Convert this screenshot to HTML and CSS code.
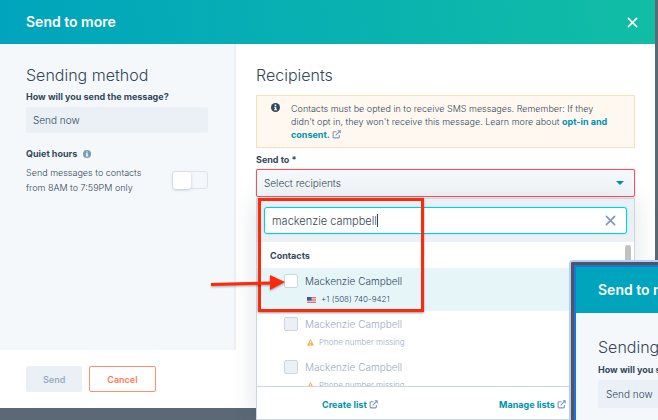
FILE: index.html
```html
<!DOCTYPE html>
<html lang="en">
<head>
<meta charset="utf-8">
<title>Send to more</title>
<link rel="stylesheet" href="styles.css">
</head>
<body>
<svg class="sprite" aria-hidden="true">
  <symbol id="external" viewBox="0 0 16 16"><path d="M8 3H3.5Q2 3 2 4.500V12.500Q2 14 3.500 14H11.500Q13 14 13 12.500V9M6.500 9.500L13.500 2.500" fill="none" stroke="currentColor" stroke-width="2"/><path d="M9.500 .5H15.500V6.500Z" fill="currentColor"/></symbol>
  <symbol id="info" viewBox="0 0 16 16"><circle cx="8" cy="8" r="8" fill="currentColor"/><path d="M6.600 2.800h2.800v2.400H6.600zM5.600 6.600h3.800v4.600h1.200v1.800H5.600v-1.800h1.200V8.400H5.600z" fill="#fff"/></symbol>
  <symbol id="close" viewBox="0 0 12 12"><path d="M1.500 1.500L10.500 10.500M10.500 1.500L1.500 10.500" fill="none" stroke="currentColor" stroke-width="1.700" stroke-linecap="round"/></symbol>
  <symbol id="warning" viewBox="0 0 12 12"><path d="M6 1L11 10.500H1Z" fill="#f5b652" stroke="#f5b652" stroke-width="1.500" stroke-linejoin="round"/><path d="M6 4v3.300M6 8.500v1.300" stroke="#fff" stroke-width="1.300"/></symbol>
  <symbol id="flag" viewBox="0 0 18 12"><path fill="#f4dfe3" d="M0 0h18v12H0z"/><path d="M0 1h18M0 4.300h18M0 7.600h18M0 11h18" stroke="#d9606f" stroke-width="1.700"/><path fill="#3c5a94" d="M0 0h9v7H0z"/></symbol>
</svg>

<main class="modal">
  <header class="modal-header">
    <h1>Send to more</h1>
    <button class="close" type="button" aria-label="Close"><svg><use href="#close"/></svg></button>
  </header>

  <div class="modal-body">
    <section class="method">
      <h2>Sending method</h2>
      <label class="label" for="when">How will you send the message?</label>
      <select class="when" id="when"><option>Send now</option></select>
      <label class="label quiet" for="quiet">Quiet hours <svg><use href="#info"/></svg></label>
      <div class="quiet-row">
        <p>Send messages to contacts from 8AM to 7:59PM only</p>
        <input class="toggle" id="quiet" type="checkbox">
      </div>
    </section>

    <section class="recipients">
      <h2>Recipients</h2>
      <div class="alert">
        <svg><use href="#info"/></svg>
        <p>Contacts must be opted in to receive SMS messages. Remember: If they didn't opt in, they won't receive this message. Learn more about <a href="#opt-in">opt-in and consent. <svg><use href="#external"/></svg></a></p>
      </div>
      <label class="label" for="send-to">Send to *</label>
      <div class="picker">
        <button class="picker-button" id="send-to" type="button">Select recipients <span class="caret"></span></button>
        <div class="menu">
          <div class="search">
            <input type="text" value="mackenzie campbell" aria-label="Search contacts">
            <span class="cursor"></span>
            <button class="clear" type="button" aria-label="Clear"><svg><use href="#close"/></svg></button>
          </div>
          <div class="list">
            <h3>Contacts</h3>
            <label class="contact active">
              <input type="checkbox">
              <span class="name">Mackenzie Campbell</span>
              <span class="detail"><svg class="flag"><use href="#flag"/></svg>+1 (508) 740-9421</span>
            </label>
            <label class="contact disabled">
              <input type="checkbox" disabled>
              <span class="name">Mackenzie Campbell</span>
              <span class="detail"><svg><use href="#warning"/></svg>Phone number missing</span>
            </label>
            <label class="contact disabled">
              <input type="checkbox" disabled>
              <span class="name">Mackenzie Campbell</span>
              <span class="detail"><svg><use href="#warning"/></svg>Phone number missing</span>
            </label>
            <span class="scrollbar"></span>
          </div>
          <div class="menu-footer">
            <a href="#create">Create list <svg><use href="#external"/></svg></a>
            <a href="#manage">Manage lists <svg><use href="#external"/></svg></a>
          </div>
          <div class="highlight"></div>
          <svg class="arrow" viewBox="0 0 76 20"><path d="M1 11.500L62 10" stroke="#fb2a0c" stroke-width="3"/><path d="M60 2L75 9L60 17Z" fill="#fb2a0c"/></svg>
        </div>
      </div>
    </section>
  </div>

  <footer class="modal-footer">
    <button class="send" type="button" disabled>Send</button>
    <button class="cancel" type="button">Cancel</button>
  </footer>
</main>

<aside class="inset">
  <header class="inset-header">Send to more</header>
  <div class="inset-body">
    <h2>Sending method</h2>
    <label class="label" for="inset-when">How will you send the message?</label>
    <select class="when" id="inset-when"><option>Send now</option></select>
  </div>
</aside>
</body>
</html>
```

FILE: styles.css
```css
* { box-sizing: border-box; }

body {
  margin: 0;
  min-height: 100vh;
  overflow: hidden;
  position: relative;
  background: #5b6876;
  color: #33475b;
  font: 300 9px/13px Inter, "Liberation Sans", sans-serif;
}

h1, h2, h3, p { margin: 0; }
button, input, select { font: inherit; color: inherit; margin: 0; }
svg { display: block; width: 9px; height: 9px; flex: none; }
.sprite { position: absolute; width: 0; height: 0; }
a { color: #0091ae; font-weight: 700; text-decoration: none; }
a svg { display: inline-block; vertical-align: -1px; color: #7c98b6; }

.modal {
  display: flex;
  flex-direction: column;
  height: calc(100vh - 12px);
  margin-right: 3px;
  background: #fff;
}

.modal-header {
  display: flex;
  align-items: center;
  justify-content: space-between;
  height: 44px;
  padding: 0 17px 0 26px;
  color: #fff;
  background: linear-gradient(80deg, #00a4bd, #12bda5);
}
h1 { font-size: 14px; line-height: 18px; font-weight: 600; }
.close, .clear { display: flex; padding: 0; border: 0; background: none; }
.close svg { width: 11px; height: 11px; }

.modal-body { flex: 1; display: flex; min-height: 0; }
.method {
  flex: none;
  width: 236px;
  padding: 21px 26px;
  background: #f5f8fa;
  border-right: 2px solid #eaf0f6;
}
h2 { font-size: 16px; line-height: 20px; font-weight: 300; }
.label { display: block; font-weight: 700; line-height: 12px; }
.method h2 + .label, .inset-body .label { margin-top: 6px; }
.when {
  appearance: none;
  display: block;
  width: 100%;
  height: 26px;
  margin-top: 4px;
  padding: 0 7px;
  border: 0;
  border-radius: 2px;
  background: #eaf0f6;
  font-size: 10px;
}
.quiet { display: flex; align-items: center; gap: 6px; margin-top: 15px; }
.quiet svg { width: 8px; height: 8px; color: #7c98b6; }
.quiet-row { display: flex; align-items: center; justify-content: space-between; margin-top: 5px; line-height: 15px; }
.quiet-row p { width: 125px; }
.toggle {
  appearance: none;
  width: 36px;
  height: 18px;
  border: 1px solid #dfe3eb;
  border-radius: 3px;
}
.toggle::before {
  content: "";
  display: block;
  width: 18px;
  height: 17px;
  border-radius: 3px;
  background: #fff;
  box-shadow: 0 1px 3px #b6c7d6;
}

.recipients { flex: 1; padding: 21px 20px 0; }
.alert {
  display: flex;
  gap: 11px;
  margin: 10px 0 6px;
  padding: 6px 24px 6px 14px;
  border: 1px solid #fae0b5;
  background: #fef8f0;
}
.alert > svg { margin-top: 1px; }
.picker { position: relative; margin-top: 3px; }
.picker-button {
  display: flex;
  align-items: center;
  justify-content: space-between;
  width: 100%;
  height: 28px;
  padding: 0 10px 0 7px;
  border: 1px solid #f2545b;
  border-radius: 2px;
  background: #f5f8fa;
  box-shadow: 0 0 1px #f2545b;
  font-size: 10px;
}
.caret { border: 4px solid transparent; border-top-color: #0091ae; border-bottom: 0; }

.menu {
  position: absolute;
  top: calc(100% + 1px);
  left: 0;
  right: 0;
  border: 1px solid #cbd6e2;
  background: #fff;
  box-shadow: 0 1px 24px rgba(45, 62, 80, .14);
}
.search { position: relative; padding: 8px 7px; background: #eaf0f6; }
.search input {
  display: block;
  width: 100%;
  height: 27px;
  padding: 0 28px 0 7px;
  border: 1px solid #00d0e4;
  border-radius: 3px;
  outline: 0;
  box-shadow: 0 0 2px #7fe0ea;
  background: #fff;
  font-size: 11px;
}
.cursor { position: absolute; top: 15px; left: 120px; width: 1px; height: 13px; background: #33475b; }
.clear { position: absolute; top: 16px; right: 18px; color: #7c98b6; }
.clear svg { width: 11px; height: 11px; }

.list { position: relative; height: 144px; overflow: hidden; }
h3 { padding: 7px 13px 6px; font-size: 9px; line-height: 13px; font-weight: 700; }
.contact {
  display: grid;
  grid-template-columns: 14px 1fr;
  column-gap: 7px;
  height: 43px;
  padding: 6px 27px 0;
}
.active { background: #e5f5f8; }
.contact input {
  appearance: none;
  width: 14px;
  height: 14px;
  border: 1px solid #cbd6e2;
  border-radius: 2px;
  background: #fff;
}
.name { font-size: 10px; line-height: 14px; }
.detail { grid-column: 2; display: flex; align-items: center; gap: 5px; padding-left: 2px; font-size: 8px; line-height: 23px; }
.detail svg { width: 7px; height: 7px; }
.detail .flag { width: 9px; height: 6px; }
.disabled { color: #99acc2; }
.disabled input { background: #eaf0f6; }
.scrollbar { position: absolute; top: 3px; right: 3px; width: 6px; height: 60px; border-radius: 3px; background: #c1c1c1; }

.menu-footer {
  display: flex;
  justify-content: space-between;
  padding: 11px 68px 8px 65px;
  border-top: 1px solid #cbd6e2;
}

.highlight {
  position: absolute;
  top: -1px;
  left: 1px;
  width: 166px;
  height: 114px;
  border: 3px solid #fb2a0c;
  box-shadow: 0 1px 2px rgba(0, 0, 0, .4);
}
.arrow { position: absolute; top: 74px; left: -47px; width: 76px; height: 20px; filter: drop-shadow(0 1px 1px rgba(0, 0, 0, .35)); }

.modal-footer { display: flex; align-items: center; gap: 7px; height: 58px; padding: 0 26px; }
.modal-footer button { height: 26px; padding: 0 17px; border: 0; border-radius: 2px; font-weight: 600; }
.modal-footer .send { background: #eaf0f6; color: #99acc2; }
.modal-footer .cancel { border: 1px solid #ff8f73; background: #fff; color: #ff7a59; }

.inset {
  position: absolute;
  top: 262px;
  right: 0;
  bottom: 0;
  left: 571px;
  overflow: hidden;
  border: solid #52565b;
  border-width: 3px 0 0 3px;
  border-radius: 2px 0 0;
  background: #f5f8fa;
  box-shadow: 0 0 0 2px #b3cefb;
  white-space: nowrap;
}
.inset-header {
  padding: 14px 22px 14px;
  border: solid #1a73e8;
  border-width: 2px 0 0 2px;
  background: #00a4bd;
  color: #fff;
  font-size: 14px;
  line-height: 18px;
  font-weight: 600;
}
.inset-body { padding: 24px 0 40px 22px; border-left: 2px solid #1a73e8; }
.inset-body .label { margin-top: 7px; }
.inset-body .when { width: 180px; height: 28px; padding: 0 8px; font-size: 10px; }
```
